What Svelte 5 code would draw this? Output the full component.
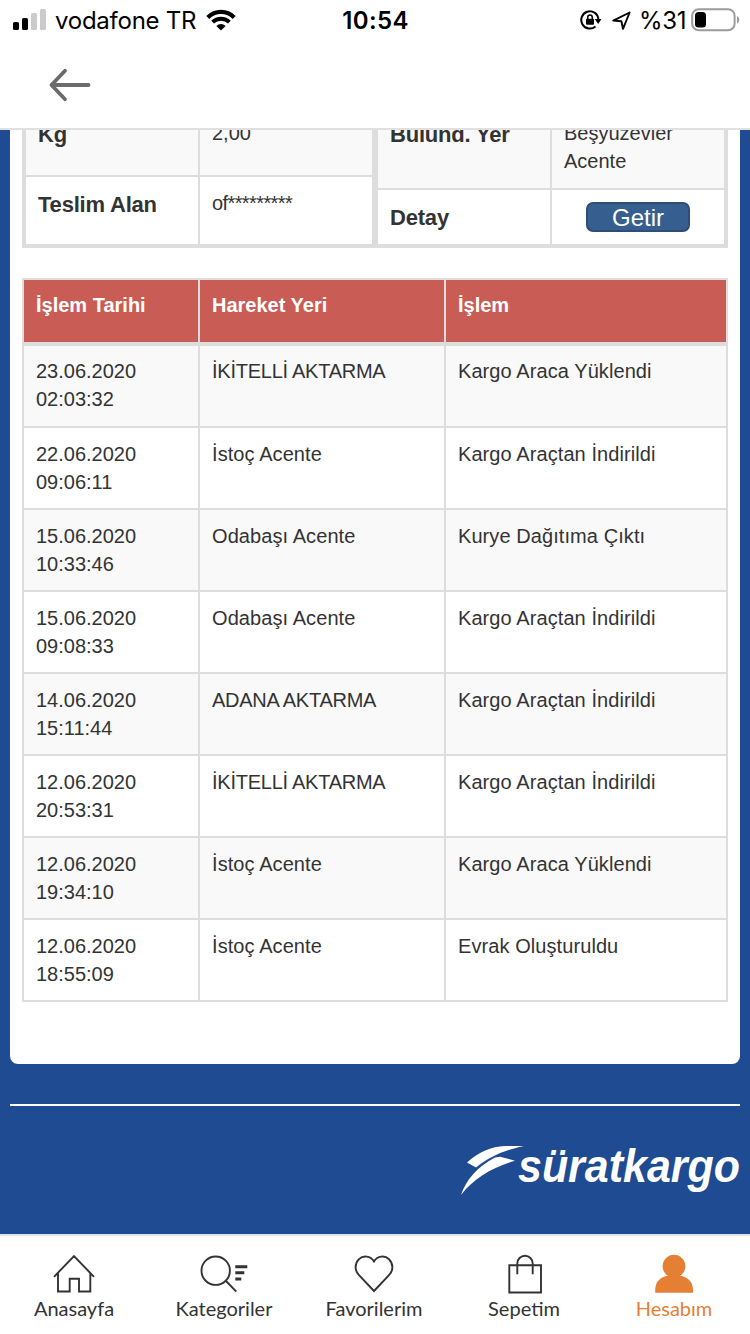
<script>
  const info = {
    left: [
      { label: 'Kg', value: '2,00' },
      { label: 'Teslim Alan', value: 'of*********', masked: true }
    ],
    right: [
      { label: 'Bulund. Yer', value: 'Beşyüzevler Acente' },
      { label: 'Detay', action: 'Getir' }
    ]
  };

  const movements = [
    { date: '23.06.2020', time: '02:03:32', place: 'İKİTELLİ AKTARMA', action: 'Kargo Araca Yüklendi' },
    { date: '22.06.2020', time: '09:06:11', place: 'İstoç Acente', action: 'Kargo Araçtan İndirildi' },
    { date: '15.06.2020', time: '10:33:46', place: 'Odabaşı Acente', action: 'Kurye Dağıtıma Çıktı' },
    { date: '15.06.2020', time: '09:08:33', place: 'Odabaşı Acente', action: 'Kargo Araçtan İndirildi' },
    { date: '14.06.2020', time: '15:11:44', place: 'ADANA AKTARMA', action: 'Kargo Araçtan İndirildi' },
    { date: '12.06.2020', time: '20:53:31', place: 'İKİTELLİ AKTARMA', action: 'Kargo Araçtan İndirildi' },
    { date: '12.06.2020', time: '19:34:10', place: 'İstoç Acente', action: 'Kargo Araca Yüklendi' },
    { date: '12.06.2020', time: '18:55:09', place: 'İstoç Acente', action: 'Evrak Oluşturuldu' }
  ];

  const tabs = [
    { id: 'home', label: 'Anasayfa' },
    { id: 'categories', label: 'Kategoriler' },
    { id: 'favorites', label: 'Favorilerim' },
    { id: 'cart', label: 'Sepetim' },
    { id: 'account', label: 'Hesabım' }
  ];

  let active = 'account';
</script>

<div class="screen">
  <header>
    <div class="status">
      <div class="status-left">
        <svg width="34" height="22" viewBox="0 0 34 22">
          <rect x="0" y="13" width="6" height="8" rx="1.6" />
          <rect x="9" y="9" width="6" height="12" rx="1.6" />
          <rect x="18" y="4" width="6" height="17" rx="1.6" fill="#cbcbcb" />
          <rect x="27" y="0" width="6" height="21" rx="1.6" fill="#cbcbcb" />
        </svg>
        <span class="carrier">vodafone TR</span>
        <svg width="30" height="22" viewBox="0 0 30 22">
          <path d="M1.8 8.4a18.6 18.6 0 0 1 26.4 0" fill="none" stroke="#000" stroke-width="4.2" />
          <path d="M6.6 13.2a11.9 11.9 0 0 1 16.8 0" fill="none" stroke="#000" stroke-width="3.8" />
          <path d="M10.4 16.9a6.5 6.5 0 0 1 9.2 0L15 21.6z" />
        </svg>
      </div>
      <span class="clock">10:54</span>
      <div class="status-right">
        <svg width="22" height="20" viewBox="0 0 22 20">
          <path d="M15.5 16.4A8.6 8.6 0 1 1 18.4 9" fill="none" stroke="#000" stroke-width="2" />
          <path d="M14.8 9h6.6l-3.2 5z" />
          <rect x="6" y="8.8" width="8" height="6" rx="1" />
          <path d="M7.7 9.5V7.4a2.3 2.3 0 0 1 4.6 0v2.1" fill="none" stroke="#000" stroke-width="1.5" />
        </svg>
        <svg class="location" width="19" height="19" viewBox="0 0 19 19">
          <path d="M1.3 9.6 17.6 1.5 11 17.8 9.4 10.2z" fill="none" stroke="#000" stroke-width="1.9" stroke-linejoin="round" />
        </svg>
        <span class="percent">%31</span>
        <svg class="battery" width="49" height="24" viewBox="0 0 49 24">
          <rect x="1.2" y="1.2" width="42.4" height="21" rx="6.5" fill="none" stroke="#9b9b9b" stroke-width="2" />
          <rect x="4" y="4" width="11" height="15.4" rx="3.5" />
          <path d="M46 8c3 1.4 3 6 0 7.4z" fill="#9b9b9b" />
        </svg>
      </div>
    </div>
    <button class="back" aria-label="Geri">
      <svg width="44" height="34" viewBox="0 0 44 34">
        <path d="M17 2.8 3.5 17 17 31.2M3.5 17h37" />
      </svg>
    </button>
  </header>

  <main>
    <section class="panel">
      <div class="info">
        {#each [info.left, info.right] as rows}
          <div class="info-table">
            {#each rows as row}
              <div class="info-row">
                <div class="info-label">{row.label}</div>
                {#if row.action}
                  <div class="info-action"><button class="fetch">{row.action}</button></div>
                {:else}
                  <div class="info-value" class:masked={row.masked}>{row.value}</div>
                {/if}
              </div>
            {/each}
          </div>
        {/each}
      </div>

      <table>
        <thead>
          <tr>
            <th class="col-date">İşlem Tarihi</th>
            <th class="col-place">Hareket Yeri</th>
            <th>İşlem</th>
          </tr>
        </thead>
        <tbody>
          {#each movements as m}
            <tr>
              <td>{m.date}<br />{m.time}</td>
              <td class:caps={m.place.endsWith('AKTARMA')}>{m.place}</td>
              <td>{m.action}</td>
            </tr>
          {/each}
        </tbody>
      </table>
    </section>

    <footer>
      <svg class="logo" width="280" height="58" viewBox="0 0 280 58">
        <path d="M7 22.5C19 12 31 6.5 45 6h19C48 9.500 41 12.500 33 16.500c-7 3.500-12 6.500-17 11z" />
        <path d="M1 55C6 40 17 27 35 17.500l5-.8 15 4C33 27 14 38 1 55z" />
        <text x="58" y="41.5" textLength="222" lengthAdjust="spacingAndGlyphs">süratkargo</text>
      </svg>
    </footer>
  </main>

  <nav>
    {#each tabs as tab}
      <button class="tab" class:active={tab.id === active} on:click={() => (active = tab.id)}>
        <svg width="60" height="46" viewBox="0 0 60 46">
          {#if tab.id === 'home'}
            <path d="M10 26.8 30 6.2l20 20.6M14 23v18.5h11.7V28.7H35v12.8h11.3V23" />
          {:else if tab.id === 'categories'}
            <circle cx="21.7" cy="20.7" r="14.2" />
            <path d="m32 31 10.3 10.6" />
            <path class="bars" d="M41.3 16.7h12M41.3 22.8h9M41.3 29h6" />
          {:else if tab.id === 'favorites'}
            <path d="M30 11.4C26.5 5.6 19 5.2 15 9.2c-4.6 4.5-4.4 11.4 0 16L30 41l15-15.8c4.4-4.6 4.6-11.5 0-16-4-4-11.5-3.6-15 2.2z" />
          {:else if tab.id === 'cart'}
            <path d="M15.3 15.3H47v27.2H15.3zM23.3 24.2V13.4a7.7 7.7 0 0 1 15.4 0v10.8" />
          {:else}
            <g class="person">
              <circle cx="30" cy="16.2" r="11.4" />
              <path d="M11.2 42.8V40c0-8 5-13 12-14.3h13.6c7 1.3 12.2 6.3 12.2 14.3v2.8z" />
            </g>
          {/if}
        </svg>
        <span>{tab.label}</span>
      </button>
    {/each}
  </nav>
</div>

<style>
  :global(body) {
    margin: 0;
  }

  .screen {
    display: flex;
    flex-direction: column;
    width: 750px;
    height: 1334px;
    overflow: hidden;
    background: #fff;
    color: #333;
    font: 20px/28px "Liberation Sans", Arial, sans-serif;
  }

  button {
    margin: 0;
    padding: 0;
    border: 0;
    background: none;
    color: inherit;
    font: inherit;
  }

  svg {
    display: block;
    flex: none;
  }

  header {
    box-sizing: border-box;
    height: 130px;
    flex: none;
    border-bottom: 2px solid #e0e0e0;
  }

  .status {
    display: grid;
    grid-template-columns: 1fr auto 1fr;
    align-items: center;
    height: 40px;
    padding: 0 10px 0 13px;
    color: #000;
    font: 24px/38px Inter, sans-serif;
  }

  .status-left,
  .status-right {
    display: flex;
    align-items: center;
  }

  .status-right {
    justify-content: flex-end;
  }

  .carrier,
  .clock,
  .percent {
    padding-top: 2px;
  }

  .carrier {
    margin: 0 10px 0 8px;
    letter-spacing: -0.25px;
  }

  .clock {
    margin-right: 2px;
    font-weight: 600;
    letter-spacing: 0.4px;
  }

  .percent {
    letter-spacing: -0.4px;
  }

  .location {
    margin: 0 8px 0 10px;
  }

  .battery {
    margin-left: 5px;
  }

  .back {
    display: block;
    margin: 28px 0 0 48px;
  }

  .back path {
    fill: none;
    stroke: #6b6b6b;
    stroke-width: 3.8;
    stroke-linecap: round;
    stroke-linejoin: round;
  }

  main {
    flex: 1;
    min-height: 0;
    overflow: hidden;
    padding: 0 10px;
    background: #1e4b91;
  }

  /* scrolled so that the top rows sit under the header */
  .panel {
    margin-top: -26px;
    padding: 0 12px 62px;
    border-radius: 0 0 8px 8px;
    background: #fff;
  }

  .info {
    display: flex;
    gap: 6px;
    padding: 4px;
    margin-bottom: 30px;
    background: #ddd;
  }

  .info-table {
    display: flex;
    flex-direction: column;
    gap: 2px;
    flex: 1;
    height: 136px;
  }

  .info-row {
    display: grid;
    grid-template-columns: 172px 172px;
    gap: 2px;
    height: 67px;
  }

  .info-table:last-child .info-row:first-child {
    height: 80px;
  }

  .info-table:last-child .info-row:last-child {
    height: 54px;
  }

  .info-row > div {
    box-sizing: border-box;
    padding: 12px;
    background: #fff;
  }

  .info-row:first-child > div {
    background: #f9f9f9;
  }

  .info-row > .info-label {
    padding-top: 14px;
    font-size: 22px;
    font-weight: bold;
    letter-spacing: -0.2px;
  }

  .info-row:first-child > .info-label {
    padding-top: 13px;
  }

  .info-row > .info-value {
    padding-top: 11px;
  }

  .info-row > .masked {
    padding-top: 12px;
    letter-spacing: -0.6px;
  }

  .info-row > .info-action {
    display: flex;
    justify-content: center;
  }

  .fetch {
    box-sizing: border-box;
    width: 104px;
    height: 30px;
    padding-top: 1px;
    border: 2px solid #2e4e78;
    border-radius: 7px;
    background: #365f8f;
    color: #fff;
    font-size: 24px;
    line-height: 26px;
  }

  table {
    width: 706px;
    table-layout: fixed;
    border-collapse: separate;
    border-spacing: 2px;
    background: #ddd;
  }

  th,
  td {
    box-sizing: border-box;
    height: 80px;
    padding: 12px;
    background: #fff;
    text-align: left;
    vertical-align: top;
  }

  th {
    height: 64px;
    padding: 11px 12px;
    border-bottom: 2px solid #ddd;
    background: #c95c54;
    background-clip: padding-box;
    color: #fff;
  }

  .col-date {
    width: 174px;
  }

  .col-place {
    width: 244px;
  }

  td:nth-child(2),
  td:nth-child(3) {
    letter-spacing: 0.08px;
  }

  td.caps {
    letter-spacing: -0.25px;
  }

  tbody tr:nth-child(odd) td {
    background: #f9f9f9;
  }

  tbody tr:first-child td {
    padding: 11px 12px 13px;
  }

  footer {
    margin-top: 40px;
    padding-top: 34px;
    border-top: 2px solid #fff;
  }

  .logo {
    margin-left: auto;
    fill: #fff;
  }

  .logo text {
    font: italic 700 47px "Liberation Sans", Arial, sans-serif;
  }

  nav {
    box-sizing: border-box;
    display: grid;
    grid-template-columns: repeat(5, 150px);
    height: 100px;
    flex: none;
    margin-left: -1px;
    border-top: 2px solid #dfe3ea;
    background: #fff;
  }

  .tab {
    display: flex;
    flex-direction: column;
    align-items: center;
    padding-top: 14px;
    font: 20px/24px Lato, sans-serif;
  }

  .tab svg {
    fill: none;
    stroke: #333;
    stroke-width: 1.9;
  }

  .tab .bars {
    stroke-width: 3;
  }

  .tab .person {
    fill: #e57f33;
    stroke: none;
  }

  .active {
    color: #e57f33;
  }
</style>
